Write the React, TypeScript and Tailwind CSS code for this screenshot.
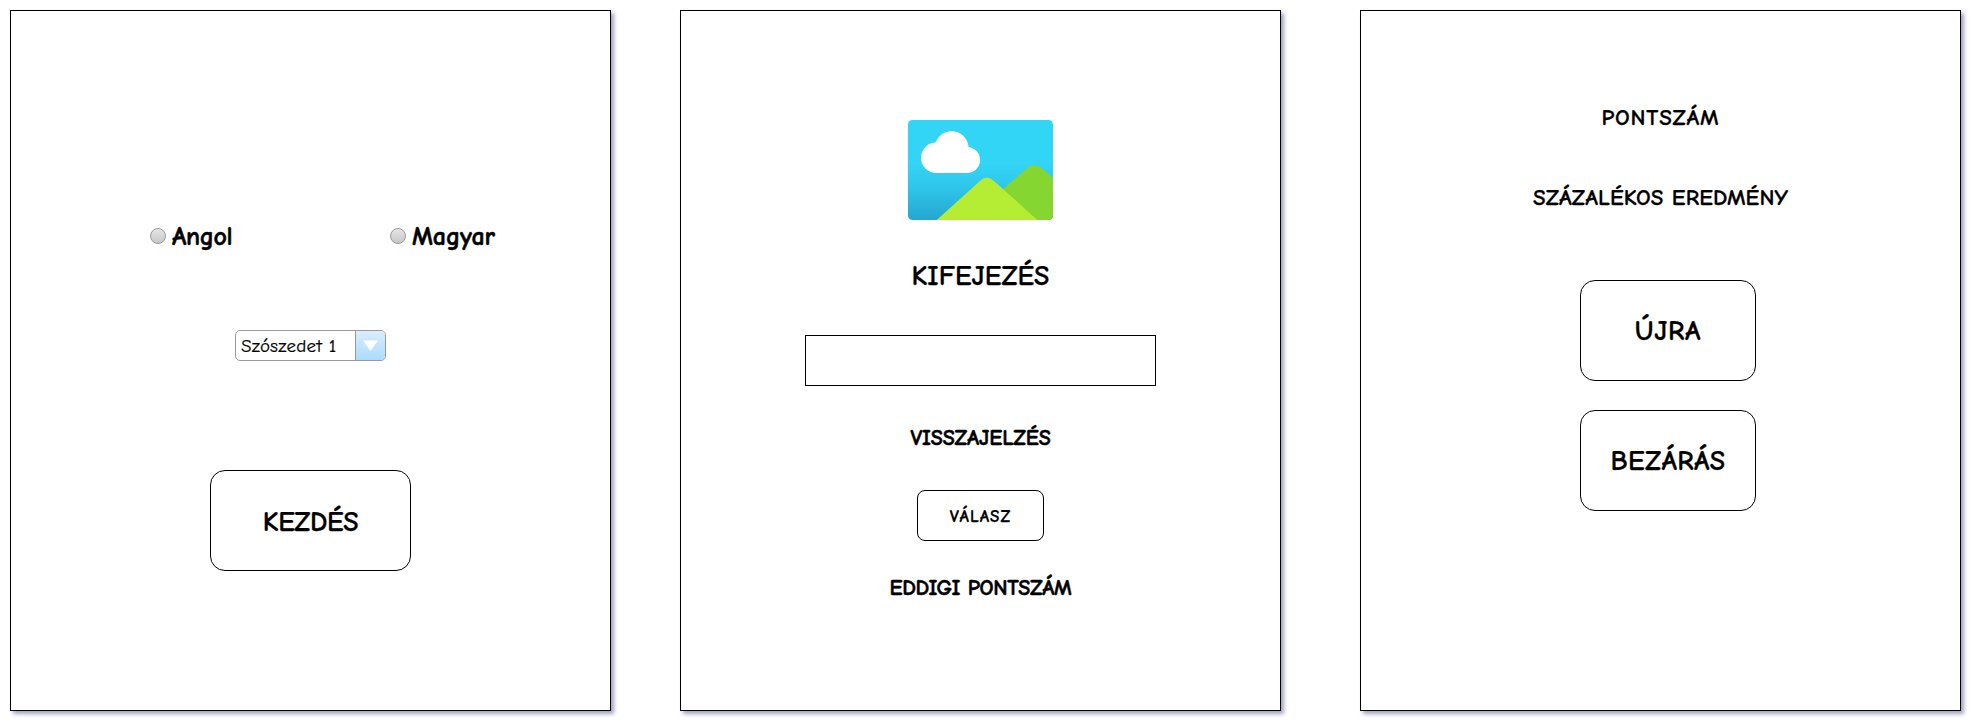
import type { ReactNode } from "react";

function Screen({ children, className }: { children: ReactNode; className: string }) {
  return (
    <section
      className={`flex h-[701px] w-[601px] shrink-0 flex-col items-center border border-black bg-white shadow-[3px_3px_4px_#a3a3c2] ${className}`}
    >
      {children}
    </section>
  );
}

function Label({ children, className }: { children: ReactNode; className: string }) {
  return <div className={`flex items-center justify-center whitespace-nowrap font-bold ${className}`}>{children}</div>;
}

function Button({ children, className }: { children: ReactNode; className: string }) {
  return (
    <button
      type="button"
      className={`flex items-center justify-center whitespace-nowrap border border-black bg-white font-bold [-webkit-text-stroke:0.25px_black] ${className}`}
    >
      {children}
    </button>
  );
}

function Radio({ children, className }: { children: ReactNode; className: string }) {
  return (
    <label className={`flex h-6 items-center gap-[6px] text-[26px] font-bold [-webkit-text-stroke:0.5px_black] ${className}`}>
      <span className="size-4 shrink-0 rounded-full border border-[#999] bg-linear-to-b from-[#e6e6e6] to-[#c8c8c8]" />
      <span className="whitespace-nowrap pt-0.5">{children}</span>
    </label>
  );
}

function Landscape() {
  return (
    <svg className="h-[100px] w-[145px] shrink-0" viewBox="0 0 145 100">
      <defs>
        <linearGradient id="sky" x1="0" y1="0" x2="0" y2="1">
          <stop offset="0.42" stopColor="#33d5f7" />
          <stop offset="0.65" stopColor="#2fc8ec" />
          <stop offset="1" stopColor="#25a6d0" />
        </linearGradient>
        <clipPath id="frame">
          <rect width="145" height="100" rx="4.5" />
        </clipPath>
      </defs>
      <g clipPath="url(#frame)">
        <rect width="145" height="100" fill="url(#sky)" />
        <path d="M90 73.5 L118.5 48.5 Q126 42.5 133.5 48 L145 57.8 V100 H90 Z" fill="#85d631" />
        <path d="M28.7 100 L72 61 Q78.7 54 86 61 L129.3 100 Z" fill="#b5ed35" />
        <g fill="#fff">
          <circle cx="28.2" cy="37.8" r="15.2" />
          <circle cx="43.6" cy="28.2" r="17" />
          <circle cx="59" cy="40" r="13" />
          <rect x="28" y="36" width="31" height="17" />
        </g>
      </g>
    </svg>
  );
}

export default function App() {
  return (
    <main className="flex h-[720px] w-[1971px] overflow-hidden bg-white pt-[10px] pl-[10px] font-['Comic_Sans_MS','Comic_Neue','Inter',cursive] leading-none text-black">
      <Screen className="pt-[213px]">
        <div className="flex w-full pl-[139px]">
          <Radio className="w-[240px] tracking-[-0.4px]">Angol</Radio>
          <Radio className="tracking-[-0.1px]">Magyar</Radio>
        </div>
        <div className="mt-[82px] flex h-[31px] w-[151px] overflow-hidden rounded-[5px] border border-[#999]">
          <div className="flex w-[119px] items-center whitespace-nowrap pt-0.5 pl-[5px] text-[19px] tracking-[0.3px] [-webkit-text-stroke:0.2px_black]">
            Szószedet 1
          </div>
          <div className="flex flex-1 items-center justify-center border-l border-[#999] bg-linear-to-b from-[#dcecfc] to-[#aadcff]">
            <svg className="h-[11px] w-[15px]" viewBox="0 0 15 11">
              <path d="M0 0.5 H15 L7.5 11 Z" fill="#fff" />
            </svg>
          </div>
        </div>
        <Button className="mt-[109px] h-[101px] w-[201px] rounded-[15px] pt-0.5 text-[28px] tracking-[-0.4px]">KEZDÉS</Button>
      </Screen>

      <Screen className="ml-[69px] pt-[109px]">
        <Landscape />
        <Label className="mt-10 h-[31px] text-[28px] [-webkit-text-stroke:0.25px_black]">KIFEJEZÉS</Label>
        <input className="mt-[44px] h-[51px] w-[351px] border border-black bg-white px-2" aria-label="Kifejezés" />
        <Label className="mt-10 h-[21px] pt-0.5 text-[22px] tracking-[-0.15px] [-webkit-text-stroke:0.5px_black]">VISSZAJELZÉS</Label>
        <Button className="mt-[43px] h-[51px] w-[127px] rounded-[8px] pt-0.5 text-[17px] tracking-[1px]">VÁLASZ</Button>
        <Label className="mt-[35px] h-[21px] pt-0.5 text-[22px] tracking-[-0.35px] [-webkit-text-stroke:0.5px_black]">EDDIGI PONTSZÁM</Label>
      </Screen>

      <Screen className="ml-[79px] pt-[96px]">
        <Label className="h-5 text-[23px] tracking-[0.8px] [-webkit-text-stroke:0.25px_black]">PONTSZÁM</Label>
        <Label className="mt-[60px] h-5 text-[23px] tracking-[0.15px] [-webkit-text-stroke:0.25px_black]">SZÁZALÉKOS EREDMÉNY</Label>
        <Button className="mt-[73px] ml-[15px] h-[101px] w-[176px] rounded-[15px] text-[28px] tracking-[0.7px]">ÚJRA</Button>
        <Button className="mt-[29px] ml-[15px] h-[101px] w-[176px] rounded-[15px] text-[28px] tracking-[0.4px]">BEZÁRÁS</Button>
      </Screen>
    </main>
  );
}
